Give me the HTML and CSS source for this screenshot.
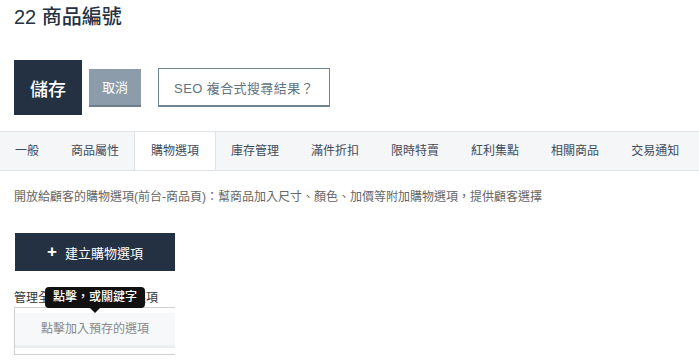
FILE: index.html
```html
<!DOCTYPE html>
<html lang="zh-Hant">
<head>
    <meta charset="UTF-8">
    <meta name="viewport" content="width=device-width, initial-scale=1.0">
    <title>22 商品編號</title>
    <link rel="stylesheet" href="styles.css">
</head>
<body>
<div class="page">
    <h1 class="title">22 商品編號</h1>

    <div class="actions">
        <button class="btn-save">儲存</button>
        <button class="btn-cancel">取消</button>
        <button class="btn-seo">SEO 複合式搜尋結果？</button>
    </div>

    <div class="tabs">
        <div class="tab first">一般</div>
        <div class="tab">商品屬性</div>
        <div class="tab active">購物選項</div>
        <div class="tab">庫存管理</div>
        <div class="tab">滿件折扣</div>
        <div class="tab">限時特賣</div>
        <div class="tab">紅利集點</div>
        <div class="tab">相關商品</div>
        <div class="tab">交易通知</div>
    </div>

    <p class="desc">開放給顧客的購物選項(前台-商品頁)：幫商品加入尺寸、顏色、加價等附加購物選項，提供顧客選擇</p>

    <button class="btn-create"><span class="plus">+</span>建立購物選項</button>

    <div class="picker">
        <div class="picker-label">管理全站已預存的購物選項</div>
        <div class="tooltip">點擊，或關鍵字</div>
        <div class="picker-box">
            <div class="picker-add">點擊加入預存的選項</div>
        </div>
    </div>
</div>
</body>
</html>
```

FILE: styles.css
```css
body, html {
    margin: 0;
    background: white;
    font-family: "Liberation Sans", "Noto Sans CJK TC", sans-serif;
    overflow: hidden;
}
.page {
    padding: 0 14px;
}
.title {
    margin: 0;
    padding-top: 3px;
    font-size: 20px;
    line-height: 28px;
    font-weight: 500;
    color: #243142;
}
.actions {
    display: flex;
    align-items: center;
    margin-top: 29px;
}
button {
    font-family: inherit;
    cursor: pointer;
    padding: 0;
}
.btn-save {
    width: 68px;
    height: 55px;
    background: #243142;
    color: white;
    border: none;
    font-size: 18px;
    font-weight: 500;
}
.btn-cancel {
    margin-left: 7px;
    width: 52px;
    height: 38px;
    background: #8d9cab;
    color: white;
    border: none;
    border-bottom: 2px solid #6f7e8c;
    font-size: 13px;
}
.btn-seo {
    margin-left: 17px;
    width: 172px;
    height: 39px;
    background: white;
    color: #5f7381;
    border: 1px solid #6f8391;
    border-bottom-width: 2px;
    font-size: 13px;
    letter-spacing: 0.4px;
}
.tabs {
    display: flex;
    margin: 16px -14px 0;
    background: #f4f6f8;
    border-top: 1px solid #e1e4e8;
    border-bottom: 1px solid #dfe2e6;
}
.tab {
    padding: 0 16px;
    line-height: 38px;
    font-size: 12px;
    color: #3d4b5b;
    border-left: 1px solid transparent;
    border-right: 1px solid transparent;
    margin: 0 -1px;
}
.tab.first {
    padding-left: 14px;
    margin-left: 0;
}
.tab.active {
    background: white;
    border-color: #dfe2e6;
}
.desc {
    margin: 18px 0 0;
    font-size: 12px;
    line-height: 16px;
    color: #666;
}
.btn-create {
    margin: 28px 0 0 1px;
    width: 160px;
    height: 38px;
    background: #243142;
    color: white;
    border: none;
    font-size: 13px;
    display: flex;
    align-items: center;
    justify-content: center;
}
.plus {
    font-weight: bold;
    font-size: 17px;
    margin-right: 8px;
}
.picker {
    position: relative;
    width: 161px;
    margin-top: 19px;
}
.picker-label {
    font-size: 12px;
    line-height: 16px;
    color: #333;
    white-space: nowrap;
}
.tooltip {
    position: absolute;
    left: 31px;
    top: -3px;
    width: 100px;
    height: 21px;
    line-height: 21px;
    background: #111;
    color: white;
    font-size: 12px;
    font-weight: 500;
    text-align: center;
    border-radius: 4px;
}
.tooltip::after {
    content: "";
    position: absolute;
    left: 45px;
    bottom: -5px;
    border-left: 5px solid transparent;
    border-right: 5px solid transparent;
    border-top: 5px solid #111;
}
.picker-box {
    margin-top: 1px;
    border: 1px solid #cfcfcf;
    border-right: none;
    padding-top: 5px;
    box-sizing: border-box;
    height: 48px;
}
.picker-add {
    height: 32px;
    line-height: 32px;
    background: #f7f8f9;
    border-bottom: 3px solid #eceef0;
    text-align: center;
    font-size: 12px;
    color: #888;
}
```
